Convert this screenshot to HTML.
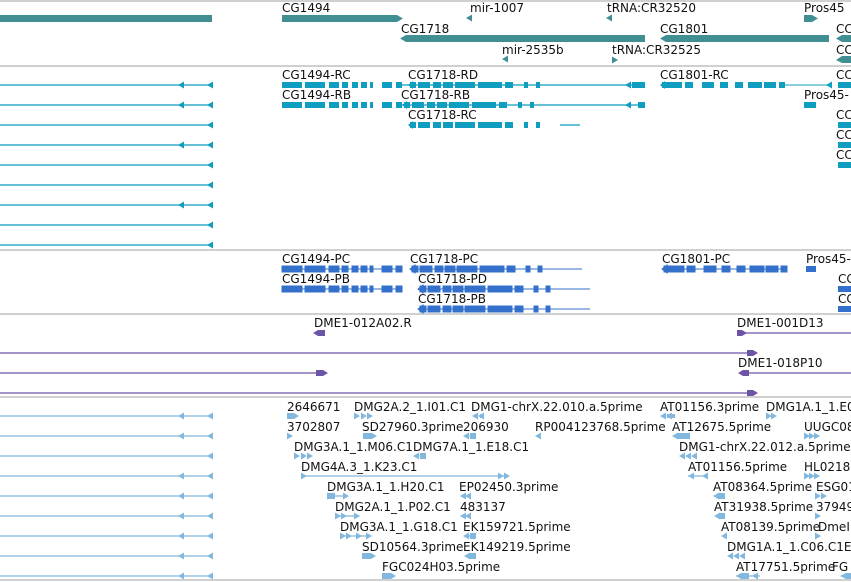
<!DOCTYPE html>
<html><head><meta charset="utf-8"><style>
html,body{margin:0;padding:0;background:#fff;width:851px;height:582px;overflow:hidden}
svg{display:block}
text{font-family:"DejaVu Sans","Liberation Sans",sans-serif;font-size:12px;fill:#111}
</style></head><body>
<svg width="851" height="582" viewBox="0 0 851 582">
<defs>
<polygon id="la" points="0,0 6,-3.5 6,3.5"/>
<polygon id="ra" points="6,0 0,-3.5 0,3.5"/>
<g id="g1494"><line x1="0" y1="0" x2="120" y2="0" stroke-width="1"/>
<rect x="0" y="-3" width="20" height="6"/><rect x="23" y="-3" width="20" height="6"/><rect x="47" y="-3" width="10" height="6"/><rect x="60" y="-3" width="6" height="6"/><rect x="70" y="-3" width="6" height="6"/><rect x="79" y="-3" width="6" height="6"/><rect x="88" y="-3" width="3" height="6"/><rect x="100" y="-3" width="10" height="6"/><rect x="114" y="-3" width="6" height="6"/></g>
<g id="g1718"><line x1="0" y1="0" x2="172" y2="0" stroke-width="1"/>
<rect x="2" y="-3" width="6" height="6"/><rect x="10" y="-3" width="12" height="6"/><rect x="25" y="-3" width="8" height="6"/><rect x="35" y="-3" width="10" height="6"/><rect x="47" y="-3" width="20" height="6"/><rect x="70" y="-3" width="24" height="6"/><rect x="97" y="-3" width="8" height="6"/><rect x="116" y="-3" width="4" height="6"/><rect x="128" y="-3" width="4" height="6"/><polygon points="0,0 5,-4 5,4"/></g>
<g id="g1801"><line x1="0" y1="0" x2="125" y2="0" stroke-width="1"/>
<rect x="2" y="-3" width="20" height="6"/><rect x="25" y="-3" width="8" height="6"/><rect x="42" y="-3" width="12" height="6"/><rect x="60" y="-3" width="8" height="6"/><rect x="75" y="-3" width="8" height="6"/><rect x="88" y="-3" width="14" height="6"/><rect x="104" y="-3" width="12" height="6"/><rect x="119" y="-3" width="6" height="6"/><polygon points="0,0 5,-4 5,4"/></g>
</defs>
<g stroke="#c0c0c0" stroke-width="1.5"><line x1="0" y1="1" x2="851" y2="1"/><line x1="0" y1="66" x2="851" y2="66"/><line x1="0" y1="250" x2="851" y2="250"/><line x1="0" y1="314" x2="851" y2="314"/><line x1="0" y1="397" x2="851" y2="397"/><line x1="0" y1="580" x2="851" y2="580"/></g>

<g fill="#418f93">
<rect x="0" y="15" width="212" height="7"/>
<polygon points="282,15 397,15 403,18.5 397,22 282,22"/>
<use href="#la" x="466" y="18"/>
<use href="#la" x="606" y="18"/>
<polygon points="804,15 812,15 818,18.5 812,22 804,22"/>
<polygon points="400,38.5 406,35 645,35 645,42 406,42"/>
<polygon points="660,38.5 666,35 829,35 829,42 666,42"/>
<polygon points="836,38.5 842,35 851,35 851,42 842,42"/>
<use href="#la" x="502" y="59"/>
<use href="#ra" x="612" y="60"/>
<polygon points="836,60 842,56 851,56 851,63 842,63"/>
</g>
<text x="282" y="12">CG1494</text><text x="470" y="12">mir-1007</text><text x="607" y="12">tRNA:CR32520</text><text x="804" y="12">Pros45</text>
<text x="401" y="33">CG1718</text><text x="660" y="33">CG1801</text><text x="836" y="33">CC</text>
<text x="502" y="54">mir-2535b</text><text x="612" y="54">tRNA:CR32525</text><text x="836" y="54">CC</text>

<g fill="#0f9ebf" stroke="#0f9ebf">
<g stroke-width="1.2">
<line x1="0" y1="85" x2="212" y2="85"/><line x1="0" y1="105" x2="212" y2="105"/><line x1="0" y1="125" x2="212" y2="125"/><line x1="0" y1="145" x2="212" y2="145"/><line x1="0" y1="165" x2="212" y2="165"/><line x1="0" y1="185" x2="212" y2="185"/><line x1="0" y1="205" x2="212" y2="205"/><line x1="0" y1="225" x2="212" y2="225"/><line x1="0" y1="245" x2="212" y2="245"/>
<line x1="402" y1="85" x2="645" y2="85"/><line x1="402" y1="105" x2="645" y2="105"/><line x1="560" y1="125" x2="580" y2="125"/>
</g>
<g stroke="none">
<use href="#la" x="178" y="85"/><use href="#la" x="207" y="85"/><use href="#la" x="178" y="105"/><use href="#la" x="207" y="105"/><use href="#la" x="207" y="125"/><use href="#la" x="178" y="145"/><use href="#la" x="207" y="145"/><use href="#la" x="207" y="165"/><use href="#la" x="207" y="185"/><use href="#la" x="178" y="205"/><use href="#la" x="207" y="205"/><use href="#la" x="207" y="225"/><use href="#la" x="207" y="245"/>
<use href="#g1494" x="282" y="85"/><use href="#g1494" x="282" y="105"/>
<use href="#g1718" x="408" y="85"/><use href="#g1718" x="402" y="105"/><use href="#g1718" x="408" y="125"/>
<use href="#la" x="625" y="85"/><rect x="632" y="82" width="13" height="6"/><use href="#la" x="625" y="105"/><rect x="638" y="102" width="7" height="6"/>
<use href="#g1801" x="660" y="85"/><line x1="785" y1="85" x2="830" y2="85" stroke="#0f9ebf"/><use href="#la" x="826" y="85"/>
<rect x="804" y="102" width="12" height="6"/>
<rect x="838" y="82" width="13" height="6"/><rect x="838" y="122" width="13" height="6"/><rect x="838" y="142" width="13" height="6"/><rect x="838" y="162" width="13" height="6"/>
</g></g>
<text x="282" y="79">CG1494-RC</text><text x="408" y="79">CG1718-RD</text><text x="660" y="79">CG1801-RC</text><text x="836" y="79">CC</text>
<text x="282" y="99">CG1494-RB</text><text x="401" y="99">CG1718-RB</text><text x="804" y="99">Pros45-</text>
<text x="408" y="119">CG1718-RC</text><text x="836" y="119">CC</text><text x="836" y="139">CC</text><text x="836" y="159">CC</text>

<g fill="#3370cc" stroke="#3370cc">
<use href="#g1494" x="282" y="269"/><use href="#g1494" x="282" y="289"/>
<use href="#g1718" x="410" y="269"/><use href="#g1718" x="418" y="289"/><use href="#g1718" x="418" y="309"/>
<use href="#g1801" x="662" y="269"/>
<g stroke="none"><rect x="806" y="266" width="10" height="6"/><rect x="838" y="286" width="13" height="6"/><rect x="838" y="306" width="13" height="6"/></g>
</g>
<text x="282" y="263">CG1494-PC</text><text x="410" y="263">CG1718-PC</text><text x="662" y="263">CG1801-PC</text><text x="806" y="263">Pros45-</text>
<text x="282" y="283">CG1494-PB</text><text x="418" y="283">CG1718-PD</text><text x="838" y="283">CC</text>
<text x="418" y="303">CG1718-PB</text><text x="838" y="303">CC</text>

<g fill="#6e54a6" stroke="#6e54a6">
<g stroke-width="1.2"><line x1="745" y1="333" x2="851" y2="333"/><line x1="0" y1="353" x2="752" y2="353"/><line x1="0" y1="373" x2="322" y2="373"/><line x1="745" y1="373" x2="851" y2="373"/><line x1="0" y1="393" x2="752" y2="393"/></g>
<g stroke="none">
<polygon points="313,333 318,330 325,330 325,336 318,336"/>
<polygon points="737,330 742,330 747,333 742,336 737,336"/>
<polygon points="747,350 753,350 758,353 753,356 747,356"/>
<polygon points="316,370 323,370 328,373 323,376 316,376"/>
<polygon points="738,373 743,370 749,370 749,376 743,376"/>
<polygon points="747,390 753,390 758,393 753,396 747,396"/>
</g></g>
<text x="314" y="327">DME1-012A02.R</text><text x="737" y="327">DME1-001D13</text><text x="738" y="367">DME1-018P10</text>

<g fill="#83b8de" stroke="#83b8de">
<g stroke-width="1.2">
<line x1="0" y1="416" x2="212" y2="416"/><line x1="0" y1="436" x2="212" y2="436"/><line x1="0" y1="456" x2="212" y2="456"/><line x1="0" y1="476" x2="212" y2="476"/><line x1="0" y1="496" x2="212" y2="496"/><line x1="0" y1="516" x2="212" y2="516"/><line x1="0" y1="536" x2="212" y2="536"/><line x1="0" y1="556" x2="212" y2="556"/><line x1="0" y1="576" x2="212" y2="576"/>
<line x1="301" y1="476" x2="505" y2="476"/><line x1="327" y1="496" x2="345" y2="496"/><line x1="335" y1="516" x2="355" y2="516"/><line x1="340" y1="536" x2="370" y2="536"/>
<line x1="688" y1="476" x2="708" y2="476"/><line x1="736" y1="576" x2="760" y2="576"/>
</g>
<g stroke="none">
<use href="#la" x="178" y="416"/><use href="#la" x="207" y="416"/><use href="#la" x="178" y="436"/><use href="#la" x="207" y="436"/><use href="#la" x="207" y="456"/><use href="#la" x="178" y="476"/><use href="#la" x="207" y="476"/><use href="#la" x="178" y="496"/><use href="#la" x="207" y="496"/><use href="#la" x="178" y="516"/><use href="#la" x="207" y="516"/><use href="#la" x="178" y="536"/><use href="#la" x="207" y="536"/><use href="#la" x="178" y="556"/><use href="#la" x="207" y="556"/><use href="#la" x="178" y="576"/><use href="#la" x="207" y="576"/>
<polygon points="287,413 294,413 299,416 294,419 287,419"/>
<use href="#ra" x="354" y="416"/><use href="#ra" x="361" y="416"/><use href="#ra" x="367" y="416"/>
<use href="#la" x="472" y="416"/><use href="#la" x="478" y="416"/><rect x="480" y="414" width="3" height="4"/>
<use href="#ra" x="287" y="436"/>
<polygon points="363,433 372,433 377,436 372,439 363,439"/>
<use href="#la" x="463" y="436"/><use href="#la" x="469" y="436"/><rect x="470" y="433" width="6" height="6"/>
<use href="#la" x="535" y="436"/>
<use href="#ra" x="294" y="456"/><use href="#ra" x="301" y="456"/><use href="#ra" x="307" y="456"/>
<use href="#la" x="413" y="456"/><use href="#la" x="419" y="456"/><rect x="420" y="453" width="6" height="6"/>
<use href="#ra" x="301" y="476"/><use href="#ra" x="498" y="476"/><use href="#ra" x="504" y="476"/>
<use href="#ra" x="327" y="496"/><rect x="327" y="493" width="8" height="6"/><use href="#ra" x="343" y="496"/>
<use href="#la" x="460" y="496"/><use href="#la" x="465" y="496"/>
<use href="#ra" x="335" y="516"/><use href="#ra" x="341" y="516"/><use href="#ra" x="354" y="516"/>
<use href="#la" x="460" y="516"/><use href="#la" x="465" y="516"/>
<use href="#ra" x="340" y="536"/><use href="#ra" x="346" y="536"/><use href="#ra" x="356" y="536"/><use href="#ra" x="366" y="536"/>
<use href="#la" x="463" y="536"/><use href="#la" x="468" y="536"/><rect x="470" y="533" width="6" height="6"/>
<polygon points="362,553 371,553 376,556 371,559 362,559"/>
<use href="#la" x="464" y="556"/><use href="#la" x="469" y="556"/><rect x="470" y="553" width="6" height="6"/>
<polygon points="382,573 391,573 396,576 391,579 382,579"/>
<use href="#la" x="660" y="416"/><use href="#la" x="666" y="416"/><rect x="667" y="414" width="8" height="4"/>
<use href="#ra" x="766" y="416"/><use href="#ra" x="771" y="416"/>
<use href="#la" x="672" y="436"/><rect x="678" y="433" width="12" height="6"/><use href="#la" x="684" y="436"/>
<use href="#ra" x="804" y="436"/><use href="#ra" x="809" y="436"/><use href="#ra" x="814" y="436"/>
<use href="#la" x="679" y="456"/><use href="#la" x="685" y="456"/><use href="#la" x="691" y="456"/>
<use href="#la" x="688" y="476"/><use href="#la" x="702" y="476"/>
<use href="#ra" x="804" y="476"/><use href="#ra" x="809" y="476"/><use href="#ra" x="814" y="476"/>
<use href="#la" x="713" y="496"/><rect x="718" y="493" width="7" height="6"/>
<use href="#ra" x="815" y="496"/><use href="#ra" x="821" y="496"/>
<use href="#la" x="714" y="516"/><rect x="719" y="513" width="6" height="6"/>
<use href="#ra" x="815" y="516"/>
<use href="#la" x="721" y="536"/>
<use href="#ra" x="815" y="536"/>
<use href="#la" x="727" y="556"/><use href="#la" x="733" y="556"/><use href="#la" x="739" y="556"/>
<use href="#la" x="736" y="576"/><rect x="741" y="573" width="8" height="6"/><use href="#la" x="752" y="576"/>
<polygon points="840,576 846,573 851,573 851,579 846,579"/>
</g></g>
<text x="287" y="411">2646671</text><text x="354" y="411">DMG2A.2_1.I01.C1</text><text x="471" y="411">DMG1-chrX.22.010.a.5prime</text><text x="660" y="411">AT01156.3prime</text><text x="766" y="411">DMG1A.1_1.E0</text>
<text x="287" y="431">3702807</text><text x="362" y="431">SD27960.3prime</text><text x="463" y="431">206930</text><text x="535" y="431">RP004123768.5prime</text><text x="672" y="431">AT12675.5prime</text><text x="804" y="431">UUGC08</text>
<text x="294" y="451">DMG3A.1_1.M06.C1</text><text x="413" y="451">DMG7A.1_1.E18.C1</text><text x="679" y="451">DMG1-chrX.22.012.a.5prime</text>
<text x="301" y="471">DMG4A.3_1.K23.C1</text><text x="688" y="471">AT01156.5prime</text><text x="804" y="471">HL0218</text>
<text x="327" y="491">DMG3A.1_1.H20.C1</text><text x="459" y="491">EP02450.3prime</text><text x="713" y="491">AT08364.5prime</text><text x="816" y="491">ESG01</text>
<text x="335" y="511">DMG2A.1_1.P02.C1</text><text x="460" y="511">483137</text><text x="714" y="511">AT31938.5prime</text><text x="816" y="511">37949</text>
<text x="340" y="531">DMG3A.1_1.G18.C1</text><text x="463" y="531">EK159721.5prime</text><text x="721" y="531">AT08139.5prime</text><text x="818" y="531">DmeI</text>
<text x="362" y="551">SD10564.3prime</text><text x="463" y="551">EK149219.5prime</text><text x="727" y="551">DMG1A.1_1.C06.C1E</text>
<text x="382" y="571">FGC024H03.5prime</text><text x="736" y="571">AT17751.5prime</text><text x="832" y="571">FG</text>
</svg>
</body></html>
